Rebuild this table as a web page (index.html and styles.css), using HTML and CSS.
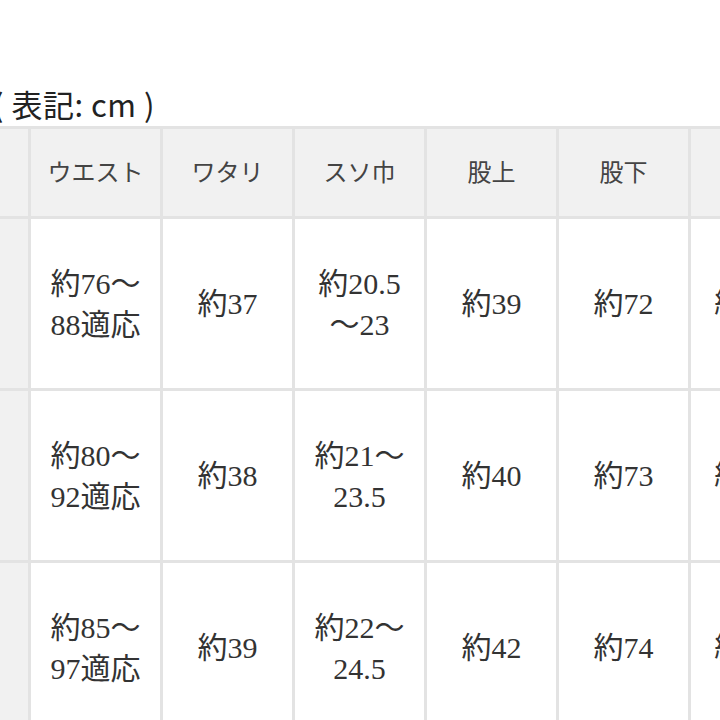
FILE: index.html
```html
<!DOCTYPE html>
<html lang="ja">
<head>
<meta charset="utf-8">
<title>サイズ表</title>
<link rel="stylesheet" href="styles.css">
</head>
<body>
<div class="viewport">
  <div class="sheet">
    <p class="caption">( 表記: cm )</p>
    <table class="sizes">
      <colgroup>
        <col class="col-size">
        <col class="col-val"><col class="col-val"><col class="col-val">
        <col class="col-val"><col class="col-val"><col class="col-val">
      </colgroup>
      <thead>
        <tr>
          <th>サイズ</th>
          <th>ウエスト</th>
          <th>ワタリ</th>
          <th>スソ巾</th>
          <th>股上</th>
          <th>股下</th>
          <th>総丈</th>
        </tr>
      </thead>
      <tbody>
        <tr>
          <th>S</th>
          <td>約76〜<br>88適応</td>
          <td>約37</td>
          <td>約20.5<br>〜23</td>
          <td>約39</td>
          <td>約72</td>
          <td>約29.5</td>
        </tr>
        <tr>
          <th>M</th>
          <td>約80〜<br>92適応</td>
          <td>約38</td>
          <td>約21〜<br>23.5</td>
          <td>約40</td>
          <td>約73</td>
          <td>約30.5</td>
        </tr>
        <tr>
          <th>L</th>
          <td>約85〜<br>97適応</td>
          <td>約39</td>
          <td>約22〜<br>24.5</td>
          <td>約42</td>
          <td>約74</td>
          <td>約31.5</td>
        </tr>
      </tbody>
    </table>
  </div>
</div>
</body>
</html>
```

FILE: styles.css
```css
html, body {
  margin: 0;
  padding: 0;
  background: #ffffff;
}

.viewport {
  width: 720px;
  height: 720px;
  overflow: hidden;
}

.sheet {
  margin-left: -108px;
  padding-top: 84px;
}

.caption {
  margin: 0 0 2px 101px;
  font-family: "Noto Sans CJK JP", "Noto Sans", sans-serif;
  font-size: 31px;
  line-height: 40px;
  letter-spacing: 0.5px;
  color: #222222;
  white-space: nowrap;
}

.sizes {
  border-collapse: collapse;
  table-layout: fixed;
  width: 928px;
  font-family: "Liberation Serif", "Noto Sans CJK JP", serif;
}

.col-size { width: 136px; }
.col-val { width: 132px; }

.sizes th,
.sizes td {
  border: 3px solid #e3e3e3;
  padding: 0 10px;
  text-align: center;
  vertical-align: middle;
  white-space: nowrap;
}

.sizes thead th {
  height: 82px;
  padding-bottom: 5px;
  background: #f1f1f1;
  font-size: 24px;
  font-weight: normal;
  color: #444444;
}

.sizes tbody th {
  background: #f1f1f1;
  font-weight: normal;
  font-size: 24px;
  color: #444444;
}

.sizes tbody td {
  height: 169px;
  background: #ffffff;
  font-size: 30px;
  line-height: 41px;
  color: #333333;
}
```
